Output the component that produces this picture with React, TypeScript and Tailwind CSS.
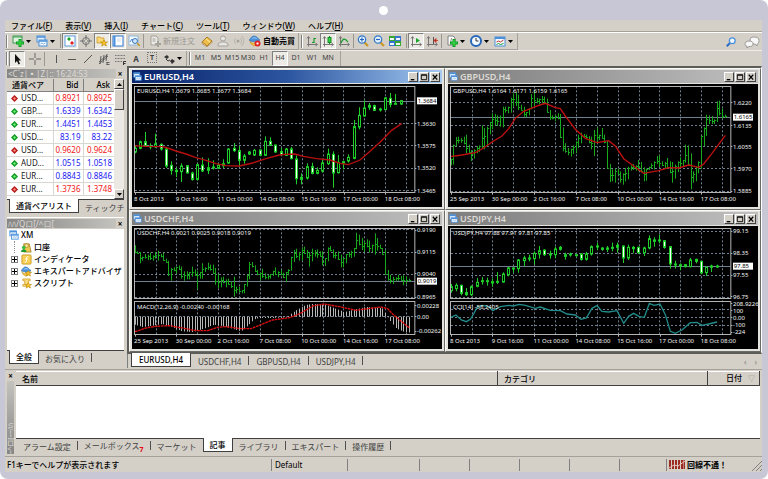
import React from "react";

type Candle = [number, number, number, number, number];
type Point = [number, number];

/* ---------- chart data, three drawing units per pixel ---------- */

const FIRST_X = 27;
const GRID_X = [90, 152, 215, 278, 340, 403, 465, 528, 591, 653, 716, 779, 841];

// high, body top, body bottom, low, 1 = falling
const eurusd: Candle[] = [
  [240, 247, 258, 262, 0], [224, 227, 247, 250, 0], [198, 227, 241, 243, 1], [232, 240, 243, 250, 0],
  [203, 234, 242, 246, 0], [232, 235, 249, 254, 1], [246, 249, 300, 306, 1], [286, 298, 313, 326, 1],
  [305, 313, 317, 333, 0], [292, 300, 317, 348, 0], [298, 299, 321, 322, 1], [317, 321, 340, 344, 1],
  [293, 296, 340, 344, 0], [274, 297, 315, 318, 1], [277, 305, 313, 324, 0], [283, 303, 306, 311, 0],
  [292, 298, 307, 309, 0], [280, 293, 299, 306, 0], [247, 249, 291, 294, 0], [231, 247, 254, 258, 1],
  [240, 254, 283, 302, 1], [264, 270, 283, 293, 0], [255, 258, 264, 267, 1], [249, 253, 267, 270, 0],
  [250, 252, 268, 270, 1], [211, 226, 268, 269, 0], [214, 226, 238, 240, 1], [236, 237, 258, 260, 1],
  [246, 257, 266, 268, 1], [246, 249, 268, 270, 0], [243, 249, 278, 280, 1], [268, 279, 338, 355, 1],
  [322, 334, 340, 355, 0], [292, 302, 336, 341, 0], [290, 302, 322, 325, 1], [304, 313, 322, 325, 0],
  [278, 291, 315, 320, 0], [248, 264, 293, 297, 0], [256, 265, 321, 365, 1], [267, 289, 320, 323, 0],
  [284, 287, 292, 310, 0], [265, 274, 285, 290, 0], [162, 182, 277, 280, 0], [124, 148, 183, 190, 0],
  [103, 126, 150, 152, 0], [111, 118, 124, 132, 0], [116, 119, 133, 135, 1], [125, 129, 131, 137, 0],
  [93, 96, 131, 133, 0], [81, 97, 115, 124, 1], [84, 112, 115, 115, 0], [102, 104, 114, 117, 0],
];

const usdjpy: Candle[] = [
  [228, 236, 248, 254, 0], [226, 232, 242, 250, 0], [230, 232, 256, 262, 1], [240, 254, 260, 264, 1],
  [232, 236, 260, 264, 0], [210, 223, 235, 238, 0], [207, 218, 220, 230, 0], [209, 218, 221, 233, 0],
  [212, 221, 225, 236, 0], [192, 220, 223, 228, 0], [193, 198, 222, 224, 0], [177, 180, 200, 205, 0],
  [178, 180, 182, 194, 0], [153, 156, 182, 194, 0], [143, 150, 158, 174, 0], [140, 150, 153, 160, 0],
  [130, 136, 152, 170, 0], [114, 128, 138, 152, 0], [124, 126, 140, 144, 1], [128, 138, 140, 152, 0],
  [116, 123, 140, 150, 0], [114, 118, 124, 128, 0], [134, 140, 145, 155, 0], [134, 138, 141, 146, 0],
  [138, 140, 142, 146, 0], [136, 138, 154, 158, 1], [132, 138, 154, 158, 0], [112, 116, 138, 143, 0],
  [104, 114, 116, 126, 0], [118, 120, 124, 128, 1], [114, 120, 124, 132, 0], [104, 118, 120, 130, 0],
  [104, 112, 118, 134, 0], [112, 114, 150, 165, 1], [110, 118, 150, 156, 0], [114, 118, 122, 136, 0],
  [116, 118, 134, 138, 1], [116, 120, 134, 144, 0], [82, 92, 120, 124, 0], [88, 96, 100, 116, 0],
  [80, 96, 98, 106, 0], [96, 98, 118, 122, 1], [114, 116, 168, 182, 1], [158, 168, 171, 182, 0],
  [166, 170, 174, 186, 0], [168, 170, 176, 178, 0], [150, 156, 176, 178, 0], [152, 154, 160, 166, 1],
  [160, 160, 195, 197, 1], [176, 178, 194, 204, 0], [170, 174, 178, 192, 0], [170, 174, 177, 180, 0],
];

// high, low
const gbpusd: Point[] = [
  [278, 298], [236, 296], [213, 240], [212, 232], [216, 230], [212, 235], [206, 262], [236, 260], [252, 285],
  [250, 278], [240, 262], [238, 258], [178, 246], [186, 250], [182, 238], [168, 205], [142, 190], [144, 178],
  [148, 180], [148, 182], [122, 184], [122, 140], [122, 142], [95, 140], [82, 120], [78, 120], [86, 132],
  [116, 134], [122, 152], [138, 154], [126, 148], [84, 130], [74, 122], [96, 112], [98, 116], [90, 112],
  [92, 110], [98, 140], [132, 162], [148, 160], [146, 166], [142, 160], [144, 216], [184, 256], [232, 260],
  [246, 268], [248, 272], [238, 264], [226, 262], [206, 246], [200, 232], [204, 212], [206, 216], [210, 232],
  [212, 250], [192, 270], [184, 230], [206, 222], [186, 218], [206, 232], [224, 308], [294, 348], [310, 346],
  [308, 350], [308, 326], [316, 350], [322, 356], [306, 346], [302, 340], [298, 314], [294, 312], [298, 314],
  [282, 314], [288, 318], [304, 346], [308, 344], [302, 312], [292, 308], [286, 310], [270, 294], [268, 304],
  [286, 300], [288, 306], [276, 306], [286, 322], [288, 350], [296, 338], [286, 318], [274, 306], [282, 300],
  [236, 290], [238, 298], [262, 370], [316, 350], [302, 346], [286, 322], [208, 308], [184, 240], [146, 210],
  [148, 174], [150, 174], [160, 174], [106, 168], [104, 148], [128, 158], [146, 156],
];

const usdchf: Point[] = [
  [112, 136], [130, 138], [132, 166], [146, 158], [138, 152], [140, 156], [134, 156], [142, 158], [132, 152],
  [128, 158], [138, 148], [134, 158], [152, 164], [158, 204], [180, 218], [178, 190], [176, 196], [172, 186],
  [176, 212], [190, 218], [190, 214], [192, 214], [176, 206], [184, 204], [190, 244], [192, 212], [166, 212],
  [178, 192], [164, 186], [170, 188], [170, 198], [180, 230], [198, 240], [208, 238], [206, 226], [214, 238],
  [212, 230], [220, 240], [206, 266], [236, 256], [236, 252], [246, 256], [228, 256], [200, 236], [162, 214],
  [162, 178], [172, 192], [186, 202], [194, 218], [182, 210], [196, 214], [200, 214], [198, 212], [188, 204],
  [178, 200], [190, 208], [186, 202], [194, 210], [192, 222], [184, 202], [146, 188], [126, 162], [122, 150],
  [132, 158], [118, 158], [116, 138], [126, 150], [132, 176], [122, 160], [126, 146], [124, 150], [130, 146],
  [130, 172], [150, 174], [118, 160], [114, 130], [124, 150], [134, 152], [130, 156], [140, 178], [150, 178],
  [138, 166], [132, 148], [128, 150], [120, 146], [74, 124], [80, 112], [90, 126], [100, 132], [94, 118],
  [98, 134], [110, 132], [76, 140], [90, 128], [110, 122], [120, 140], [126, 200], [186, 218], [200, 226],
  [206, 228], [208, 220], [200, 218], [204, 218], [202, 232], [206, 228], [212, 220],
];

const eurusdAverage =
  "24,239 60,241 110,242 125,246 150,255 180,264 210,275 240,283 270,293 300,299 340,300 380,291 420,278 460,267 480,265 507,264 532,271 572,278 612,282 642,292 667,296 702,282 727,260 762,229 797,193 827,173";
const gbpusdAverage =
  "24,272 60,267 100,260 125,246 150,228 180,210 200,188 220,157 245,136 280,122 310,112 340,125 355,128 370,150 400,190 430,217 465,230 500,224 520,240 545,278 575,300 605,322 650,314 680,305 710,306 740,297 770,304 785,294 810,262 850,208";
const macdSignal =
  "27,371 60,360 90,355 130,353 180,362 210,368 245,368 275,358 300,356 345,362 375,362 400,352 440,336 490,329 520,318 560,294 595,288 640,296 690,307 740,300 765,297 785,302 800,318 850,360";
const cciLine =
  "27,328 42,321 58,336 73,341 85,334 95,318 105,298 120,292 140,296 152,308 175,296 200,292 214,294 232,289 250,292 280,301 295,297 325,307 355,308 375,318 400,321 417,334 433,330 450,301 465,293 480,310 500,312 525,308 545,346 560,325 575,316 592,326 607,328 622,286 636,292 654,288 670,320 685,370 700,376 720,366 745,344 765,343 780,352 800,348 825,342";
const macdEnvelope: Point[] = [
  [27, 350], [50, 357], [75, 354], [110, 348], [135, 356], [170, 370], [200, 372], [235, 362], [265, 350],
  [300, 356], [345, 370], [370, 350], [385, 334], [400, 330], [440, 330], [485, 328], [500, 314], [520, 302],
  [540, 291], [560, 288], [600, 290], [630, 302], [655, 312], [690, 304], [720, 297], [770, 300], [785, 326],
  [795, 340], [810, 360], [830, 370], [852, 374],
];

const shortDates = ["8 Oct 2013", "9 Oct 16:00", "11 Oct 00:00", "14 Oct 08:00", "15 Oct 16:00", "17 Oct 00:00", "18 Oct 08:00"];
const longDates = ["25 Sep 2013", "30 Sep 00:00", "2 Oct 16:00", "7 Oct 08:00", "10 Oct 00:00", "14 Oct 16:00", "17 Oct 08:00"];

// centre a line on a whole pixel so that it stays sharp
const snap = (v: number) => Math.round((v - 1.5) / 3) * 3 + 1.5;

function envelopeAt(x: number) {
  for (let i = 1; i < macdEnvelope.length; i++) {
    const [x0, y0] = macdEnvelope[i - 1];
    const [x1, y1] = macdEnvelope[i];
    if (x <= x1) return y0 + ((x - x0) / (x1 - x0)) * (y1 - y0);
  }
  return 374;
}

function Candles({ data }: { data: Candle[] }) {
  return (
    <g stroke="#1fd02a" strokeWidth="3">
      {data.map(([high, top, bottom, low, falling], i) => {
        const x = snap(FIRST_X + i * 15.65);
        const h = Math.max(3, bottom - top);
        return (
          <g key={i}>
            <line x1={x} x2={x} y1={high} y2={low} />
            <rect x={x - 3} y={top} width="6" height={h} fill={falling ? "#ffffff" : "#000000"} />
          </g>
        );
      })}
    </g>
  );
}

function Bars({ data }: { data: Point[] }) {
  return (
    <g stroke="#17a81c" strokeWidth="3">
      {data.map(([high, low], i) => {
        const x = snap(FIRST_X + i * 7.83);
        const next = data[i + 1] ?? data[i];
        const close = Math.min(low - 2, Math.max(high + 2, (next[0] + next[1]) / 2));
        return <path key={i} d={`M${x} ${high}V${low}M${x} ${snap(close)}h5`} />;
      })}
    </g>
  );
}

interface ChartProps {
  label: string;
  dates: string[];
  gridY: number[];
  prices: [string, number][];
  current: [string, number];
  split?: boolean;
  children: React.ReactNode;
}

function Chart({ label, dates, gridY, prices, current, split, children }: ChartProps) {
  return (
    <svg viewBox="18 54 930 369" className="block h-auto w-full bg-black font-['Noto_Sans',sans-serif]">
      <g stroke="#6f7f90" strokeWidth="3" strokeDasharray="6 6">
        {GRID_X.map((x) => (
          <line key={x} x1={snap(x)} x2={snap(x)} y1="61" y2="380" />
        ))}
        {gridY.map((y) => (
          <line key={y} x1="27" x2="866" y1={snap(y)} y2={snap(y)} />
        ))}
      </g>
      <line x1="27" x2="866" y1={snap(current[1])} y2={snap(current[1])} stroke="#708090" strokeWidth="3" />
      {children}
      <g fill="none" stroke="#b4b4b4" strokeWidth="3">
        {split ? (
          <>
            <rect x="25.500" y="61.500" width="841" height="210" />
            <rect x="25.500" y="280.500" width="841" height="99" />
          </>
        ) : (
          <rect x="25.500" y="61.500" width="841" height="318" />
        )}
        {dates.map((d, i) => (
          <path key={d} d={`M${snap(27 + i * 125.400)} 380v6`} />
        ))}
        {prices.map(([p, y]) => (
          <path key={p} d={`M867 ${snap(y)}h4`} />
        ))}
      </g>
      <g fill="#f4f4f4" fontSize="18" className="whitespace-pre">
        <text x="33" y="81">{label}</text>
        {dates.map((d, i) => (
          <text key={d} x={24 + i * 125.400} y="405">{d}</text>
        ))}
        {prices.map(([p, y]) => (
          <text key={p} x="873" y={y + 7}>{p}</text>
        ))}
      </g>
      <rect x="873" y={current[1] - 11} width="60" height="21" fill="#ffffff" />
      <text x="875" y={current[1] + 6} fontSize="18" fill="#000000">{current[0]}</text>
    </svg>
  );
}

/* ---------- icons ---------- */

function Icon({ children, className = "size-3" }: { children: React.ReactNode; className?: string }) {
  return (
    <svg viewBox="0 0 12 12" className={`${className} shrink-0`} fill="none" aria-hidden="true">
      {children}
    </svg>
  );
}

const Windows = () => (
  <>
    <rect x="1" y="1" width="8" height="6" fill="#e4f1fd" stroke="#4a8fd8" />
    <path d="M1 2h8" stroke="#4a8fd8" strokeWidth="1.500" />
    <rect x="3" y="5" width="8" height="6" fill="#f4faff" stroke="#4a8fd8" />
    <path d="M3 6h8" stroke="#4a8fd8" strokeWidth="1.500" />
    <path d="M4.500 9l1.500-1 1.500 1L9.500 8" stroke="#6aa5e0" strokeWidth=".8" />
  </>
);
const Plus = () => <path d="M8 4v8M4 8h8" stroke="#0d9c22" strokeWidth="3" />;
const PlusLight = () => <path d="M8 5v6M5 8h6" stroke="#3fdc4c" strokeWidth="1.200" />;
const Axes = () => <path d="M2.500 2v9.500M1 9.500h10M1 3.500l1.500-2 1.500 2M9.500 8l2 1.500-2 1.500" stroke="#767676" />;
const Gold = () => <path d="M8 5l1 2h2.500l-2 1.500.8 2.500L8 9.500 5.700 11l.8-2.500-2-1.500H7z" fill="#f7c52c" stroke="#c08808" strokeWidth=".7" />;
const Expert = () => (
  <>
    <path d="M1 6c1 3 8 3 9 0l-2 4-3 1-3-2z" fill="#f2c64c" stroke="#c08c1c" strokeWidth=".6" />
    <path d="M0 5c2-1 2-4 5-4s4 3 6 4c-2 2-9 2-11 0z" fill="#4d94dc" stroke="#2b68ad" strokeWidth=".6" />
    <path d="M3.500 3.500c1-1 3-1 4 0" stroke="#a9d2fa" />
  </>
);
const Zoom = ({ plus }: { plus: boolean }) => (
  <>
    <path d="M7.500 7.500L11 11" stroke="#c99625" strokeWidth="2.200" />
    <circle cx="5" cy="4.500" r="3.700" fill="#e6f3ff" stroke="#3076c8" strokeWidth="1.200" />
    <path d={plus ? "M3 4.500h4M5 2.500v4" : "M3 4.500h4"} stroke="#2465bd" strokeWidth="1.200" />
  </>
);

function Arrow() {
  return <svg viewBox="0 0 5 3" className="h-[3px] w-[5px] shrink-0" aria-hidden="true"><path d="M0 0h5L2.500 3z" fill="#000" /></svg>;
}

interface ToolProps {
  name: string;
  pressed?: boolean;
  wide?: boolean;
  children: React.ReactNode;
}

function Tool({ name, pressed, wide, children }: ToolProps) {
  const look = pressed
    ? "border-[#808080] border-r-white border-b-white bg-[#edebe6]"
    : "border-transparent";
  return (
    <button
      type="button"
      aria-label={name}
      className={`flex h-4 shrink-0 items-center justify-center gap-[2px] border ${wide ? "w-6" : "w-4"} ${look}`}
    >
      <Icon>{children}</Icon>
      {wide && <Arrow />}
    </button>
  );
}

const Sep = () => <span className="mx-[1px] h-[14px] w-px shrink-0 bg-[#9a9791]" />;
const Grip = () => <span className="mx-[1px] h-[13px] w-[2px] shrink-0 border-l border-[#808080] bg-white" />;

/* ---------- windows and docks ---------- */

interface ChartWindowProps {
  title: string;
  active?: boolean;
  children: React.ReactNode;
}

function ChartWindow({ title, active, children }: ChartWindowProps) {
  const bar = active
    ? "bg-linear-to-r from-[#0a246a] via-[#2c55a0] to-[#a6caf0] text-white"
    : "bg-linear-to-r from-[#7d7d7d] to-[#c0c0c0] text-[#dedbd5]";
  return (
    <section className="border border-[#f8f8f6] border-r-[#6a6a66] border-b-[#6a6a66] bg-[#e4e2dd] px-[2px] pt-px pb-[2px]">
      <header className={`mb-px flex h-[13px] items-center pr-[2px] pl-px ${bar}`}>
        <Icon className="mr-[2px] size-[9px]"><Windows /></Icon>
        <h2 className="flex-1 text-[9px] leading-[13px] font-semibold">{title}</h2>
        <WindowButton name="最小化"><path d="M2 7.500h4" stroke="#000" strokeWidth="1.500" /></WindowButton>
        <WindowButton name="最大化"><path d="M1.500 2h6v5.500h-6zM1.500 2.500h6" stroke="#000" /></WindowButton>
        <WindowButton name="閉じる"><path d="M2 2l5 5.500M7 2L2 7.500" stroke="#000" strokeWidth="1.400" /></WindowButton>
      </header>
      {children}
    </section>
  );
}

function WindowButton({ name, children }: { name: string; children: React.ReactNode }) {
  return (
    <button type="button" aria-label={name} className="ml-px h-[10px] w-[10px] border border-white border-r-[#404040] border-b-[#404040] bg-[#d4d0c8]">
      <svg viewBox="0 0 9 9" className="size-2" fill="none">{children}</svg>
    </button>
  );
}

function DockTitle({ text }: { text: string }) {
  return (
    <div className="flex h-[11px] shrink-0 items-center text-[8px] leading-[9px]">
      <span className="h-[9px] flex-1 overflow-hidden bg-linear-to-r from-[#858585] to-[#c4c2bd] pl-px whitespace-nowrap text-[#dedbd5]">
        {text}
      </span>
      <button type="button" aria-label="閉じる" className="w-2 text-center font-bold">×</button>
    </div>
  );
}

const quotes: [string, string, string, boolean, boolean][] = [
  ["USD...", "0.8921", "0.8925", false, false],
  ["GBP...", "1.6339", "1.6342", true, true],
  ["EUR...", "1.4451", "1.4453", true, true],
  ["USD...", "83.19", "83.22", true, true],
  ["USD...", "0.9620", "0.9624", false, false],
  ["AUD...", "1.0515", "1.0518", true, true],
  ["EUR...", "0.8843", "0.8846", true, true],
  ["EUR...", "1.3736", "1.3748", false, false],
];

function MarketWatch() {
  return (
    <>
      <DockTitle text="<C´z|▪|Z|:: 16:24:53" />
      <div className="flex h-[120px] shrink-0 overflow-hidden bg-white">
        <table className="h-[104px] flex-1 table-fixed border-collapse text-[8px] leading-[12px]">
          <thead>
            <tr className="h-3 bg-[#d4d0c8]">
              <th className="w-[46px] border-r border-b border-[#808080] p-0 pl-[5px] text-left font-medium whitespace-nowrap">通貨ペア</th>
              <th className="w-[30px] border-r border-b border-[#808080] p-0 pr-1 text-right font-medium">Bid</th>
              <th className="border-b border-[#808080] p-0 pr-1 text-right font-medium">Ask</th>
            </tr>
          </thead>
          <tbody>
            {quotes.map(([symbol, bid, ask, up, blue], i) => (
              <tr key={i} className={`h-[13px] border-b border-[#d9d7d2] ${blue ? "text-[#1717f0]" : "text-[#f01717]"}`}>
                <td className="border-r border-[#d9d7d2] p-0 pl-1 text-[#202020]">
                  <span className="flex items-center gap-[3px]">
                    <svg viewBox="0 0 7 7" className="size-[7px]">
                      <path d="M3.500 0L7 3.500 3.500 7 0 3.500z" fill={up ? "#129a22" : "#b91818"} />
                      <path d="M3.500 2L5 3.500 3.500 5 2 3.500z" fill={up ? "#6cf078" : "#ff8d80"} />
                    </svg>
                    {symbol}
                  </span>
                </td>
                <td className="border-r border-[#d9d7d2] p-0 pr-[2px] text-right">{bid}</td>
                <td className="p-0 pr-[2px] text-right">{ask}</td>
              </tr>
            ))}
          </tbody>
        </table>
        <div className="flex w-[10px] flex-col bg-[#ece9e4]">
          <button type="button" aria-label="上へ" className="flex h-[10px] items-center justify-center border border-white border-r-[#404040] border-b-[#404040] bg-[#d4d0c8]">
            <span className="rotate-180"><Arrow /></span>
          </button>
          <span className="h-[21px] border border-white border-r-[#404040] border-b-[#404040] bg-[#d4d0c8]" />
          <button type="button" aria-label="下へ" className="mt-auto flex h-[10px] items-center justify-center border border-white border-r-[#404040] border-b-[#404040] bg-[#d4d0c8]">
            <Arrow />
          </button>
        </div>
      </div>
      <div role="tablist" className="flex h-[14px] shrink-0 border-t border-[#404040] pl-[2px] text-[8px] leading-[13px] whitespace-nowrap">
        <Tab label="通貨ペアリスト" active />
        <Tab label="ティックチ" />
      </div>
    </>
  );
}

interface TabProps {
  label: string;
  active?: boolean;
  wide?: boolean;
  children?: React.ReactNode;
}

function Tab({ label, active, wide, children }: TabProps) {
  const look = active
    ? "-mt-px border-r border-b border-l border-[#404040] bg-white font-medium text-black"
    : "text-[#404040]";
  return (
    <button
      type="button"
      role="tab"
      aria-selected={!!active}
      className={`h-[14px] shrink-0 ${wide ? "px-[7px]" : "px-[6px]"} ${look}`}
    >
      {label}
      {children}
    </button>
  );
}

const TabSep = () => <span className="mt-[2px] h-[9px] w-px shrink-0 bg-[#505050]" />;

function Navigator() {
  const items = [
    {
      label: "口座",
      icon: (
        <>
          <path d="M3 2h6l2 9H3z" fill="#f0c850" stroke="#9c7414" strokeWidth=".8" />
          <circle cx="6" cy="4" r="2" fill="#fbe69d" stroke="#a67c1c" strokeWidth=".7" />
          <circle cx="3" cy="6" r="2" fill="#35bc42" />
          <path d="M0 11c0-4 6-4 6 0z" fill="#1d9a2c" />
        </>
      ),
    },
    {
      label: "インディケータ",
      icon: (
        <>
          <rect x="1" y="1" width="10" height="10" rx="1" fill="#f8cf57" stroke="#c99a26" />
          <path d="M8 3c-2-1-2 1-2 3s-.5 4-2 3M4.500 5.500h3" stroke="#fff" />
        </>
      ),
    },
    { label: "エキスパートアドバイザ", icon: <><Expert /><Gold /></> },
    {
      label: "スクリプト",
      icon: (
        <>
          <path d="M2 1h8v2H8v6H2V7h2V3H2z" fill="#fbdc7e" stroke="#c99a26" strokeWidth=".8" />
          <Gold />
        </>
      ),
    },
  ];
  return (
    <>
      <DockTitle text="ﾊﾊ/Qロ[/^ロ[" />
      <ul className="flex-1 overflow-hidden bg-white pl-[2px] text-[8px] leading-3 font-medium whitespace-nowrap">
        <li className="flex h-3 items-center gap-[2px]">
          <Icon className="size-[10px]"><Windows /></Icon>
          <span>XM</span>
        </li>
        {items.map((item, i) => (
          <li key={item.label} className="flex h-3 items-center gap-[2px] pl-[2px]">
            {i === 0 ? (
              <span className="ml-[3px] h-3 w-[5px] border-l border-dotted border-[#909090]" />
            ) : (
              <button type="button" aria-label={`${item.label}を開く`} className="mr-[1px] flex size-[7px] items-center justify-center border border-[#808080]">
                <svg viewBox="0 0 5 5" className="size-[5px]"><path d="M0 2.500h5M2.500 0v5" stroke="#000" /></svg>
              </button>
            )}
            <Icon className="size-[11px]">{item.icon}</Icon>
            <span>{item.label}</span>
          </li>
        ))}
      </ul>
      <div role="tablist" className="flex h-[14px] shrink-0 border-t border-[#404040] pl-[2px] text-[8px] leading-[13px]">
        <Tab label="全般" active />
        <Tab label="お気に入り" />
        <TabSep />
      </div>
    </>
  );
}

const menus: [string, string][] = [
  ["ファイル", "F"], ["表示", "V"], ["挿入", "I"], ["チャート", "C"], ["ツール", "T"], ["ウィンドウ", "W"], ["ヘルプ", "H"],
];

function MainToolbar() {
  return (
    <div className="flex h-[18px] items-center border-t border-white pr-[2px]">
      <div className="flex items-center border-r border-b border-[#a5a29b] pr-px">
        <Grip />
        <Tool name="新規チャート" wide>
          <rect x="1" y="1" width="9" height="7" fill="#dff0df" stroke="#3d9c50" />
          <path d="M1 2h9" stroke="#3d9c50" />
          <Plus />
          <PlusLight />
        </Tool>
        <Tool name="組表示" wide><Windows /></Tool>
        <span className="w-[2px]" />
        <Sep />
        <Tool name="気配値表示" pressed>
          <rect x="1" y="1" width="10" height="10" fill="#fff" stroke="#5b9be0" />
          <path d="M3 4l2-2 2 2-2 2z" fill="#17a52a" />
          <path d="M6 8l2-2 2 2-2 2z" fill="#e02020" />
        </Tool>
        <Tool name="データウィンドウ">
          <circle cx="6" cy="6" r="3.500" stroke="#707070" />
          <path d="M6 0v5M6 7v5M0 6h5M7 6h5" stroke="#707070" />
        </Tool>
        <Tool name="ナビゲーター" pressed>
          <path d="M1 2h3l1 1h3v5H1z" fill="#fbd978" stroke="#c99a26" strokeWidth=".8" />
          <Gold />
        </Tool>
        <Tool name="ターミナル" pressed>
          <rect x="1" y="1" width="10" height="10" fill="#fff" stroke="#2d74cc" />
          <path d="M2.500 1v10" stroke="#4a90e0" strokeWidth="2" />
          <path d="M5 4h4M5 6h4" stroke="#cdd9e8" />
        </Tool>
        <Tool name="ストラテジーテスター">
          <rect x="1" y="1" width="9" height="9" fill="#f4faff" stroke="#8fb6dc" />
          <path d="M2 7l2-3 2 2" stroke="#4a8fd8" />
          <circle cx="7" cy="6" r="2.500" fill="#cfe6fb" stroke="#3978bd" />
          <path d="M9 8l3 3" stroke="#c99625" strokeWidth="1.500" />
        </Tool>
        <Sep />
        <button type="button" disabled className="flex h-4 items-center gap-[2px] px-1 text-[8px] text-[#9a978f]">
          <Icon>
            <path d="M2 1h5l2 2v7H2z" fill="#ebe9e5" stroke="#a5a29b" />
            <path d="M3.500 4h3M3.500 6h3" stroke="#a5a29b" />
            <path d="M9 6v6M6 9h6" stroke="#a5a29b" strokeWidth="2" />
          </Icon>
          新規注文
        </button>
        <Tool name="メタエディター">
          <path d="M1 7l5-5 5 4-5 5z" fill="#efbd45" stroke="#9c6a14" strokeWidth=".8" />
          <path d="M1 7v1.500l5 3.300 5-4.300V6l-5 5z" fill="#fff3d0" stroke="#9c6a14" strokeWidth=".6" />
          <path d="M5 4l4 3" stroke="#fff0b8" />
        </Tool>
        <Tool name="アカウント">
          <circle cx="6" cy="3.500" r="2.500" fill="#e8e6e2" stroke="#a5a29b" />
          <path d="M1 11V9l3-2h4l3 2v2z" fill="#e8e6e2" stroke="#a5a29b" />
        </Tool>
        <Tool name="シグナル">
          <circle cx="5" cy="6" r="1.500" fill="#a5a29b" />
          <path d="M3 3c-2 2-2 4 0 6M7 3c2 2 2 4 0 6M8.500 1c3 3 3 7 0 10" stroke="#b4b1aa" />
        </Tool>
        <button type="button" className="flex h-4 items-center gap-[2px] px-[2px] text-[8px] font-bold">
          <Icon>
            <Expert />
            <circle cx="8.500" cy="8.500" r="3" fill="#e02020" />
            <rect x="7.500" y="7.500" width="2" height="2" fill="#fff" />
          </Icon>
          自動売買
        </button>
      </div>
      <div className="ml-px flex items-center border-r border-b border-[#a5a29b] pr-[2px]">
        <Grip />
        <Tool name="バーチャート"><Axes /><path d="M8 3v5M8 3.500h2M6 7.500h2" stroke="#169c2a" strokeWidth="1.200" /></Tool>
        <Tool name="ローソク足" pressed><Axes /><path d="M7.500 1v8" stroke="#118a22" /><rect x="6" y="2.500" width="3" height="5" fill="#34d447" stroke="#118a22" /></Tool>
        <Tool name="ラインチャート"><Axes /><path d="M3 8c2-5 4-5 7-1" stroke="#169c2a" strokeWidth="1.200" /></Tool>
        <Sep />
        <Tool name="拡大"><Zoom plus /></Tool>
        <Tool name="縮小"><Zoom plus={false} /></Tool>
        <Tool name="整列">
          <path d="M0 1h6v5H0zM6 6h6v5H6z" fill="#36a832" />
          <path d="M6 1h6v5H6zM0 6h6v5H0z" fill="#3a72d0" />
          <path d="M1 3h4v2H1zM7 3h4v2H7zM1 8h4v2H1zM7 8h4v2H7z" fill="#eef6ff" />
        </Tool>
        <span className="w-[2px]" />
        <Sep />
        <Tool name="自動スクロール" pressed><Axes /><path d="M6 3l4 2.500L6 8z" fill="#19a62c" /></Tool>
        <Tool name="チャートシフト"><Axes /><path d="M7.500 2v7" stroke="#555" /><path d="M8 5.500h4M8 5.500l2-2v4z" stroke="#c03020" fill="#c03020" strokeWidth=".8" /></Tool>
        <Sep />
        <Tool name="インディケータ" wide>
          <path d="M2 1h5l2 2v7H2z" fill="#fff" stroke="#808080" />
          <path d="M6 3c-1 0-1 5-2 5" stroke="#808080" />
          <Plus />
          <PlusLight />
        </Tool>
        <Tool name="時間足設定" wide>
          <circle cx="6" cy="6" r="5" fill="#f5faff" stroke="#2467bd" strokeWidth="2" />
          <path d="M6 3v3h2.500" stroke="#333" />
        </Tool>
        <Tool name="定型チャート" wide>
          <rect x="1" y="2" width="10" height="9" fill="#f4faff" stroke="#4a8fd8" />
          <path d="M1 3h10" stroke="#4a8fd8" strokeWidth="2" />
          <path d="M2.500 7l2-1 2 1 3-2" stroke="#c03a2a" />
          <path d="M2.500 9.500l2-1 2 1 3-1" stroke="#229a35" />
        </Tool>
      </div>
      <div className="ml-auto flex gap-2">
        <button type="button" aria-label="検索">
          <Icon className="size-[10px]">
            <path d="M5 7L1 11" stroke="#2d6cc4" strokeWidth="2.500" />
            <circle cx="7.500" cy="4.500" r="3.500" fill="#eef6ff" stroke="#4a8fd8" strokeWidth="1.500" />
          </Icon>
        </button>
        <button type="button" aria-label="チャット">
          <svg viewBox="0 0 16 12" className="h-3 w-4" fill="#f7f7f7" stroke="#8c8c8c" strokeWidth=".8">
            <path d="M10 1c3 0 5 1 5 3.500S13.500 8 13 8v2l-2-2C8 8 6 7 6 4.500S7 1 10 1z" />
            <path d="M5 5c3 0 4 1 4 3s-1 2.500-4 2.500L3 12v-2C1 10 1 9 1 8s1-3 4-3z" />
          </svg>
        </button>
      </div>
    </div>
  );
}

const periods = ["M1", "M5", "M15", "M30", "H1", "H4", "D1", "W1", "MN"];

function LineToolbar() {
  return (
    <div className="flex h-4 items-center border-t border-[#efede9] text-[7px] text-[#404040]">
      <div className="flex items-center border-r border-[#a5a29b] pr-[2px]">
        <Grip />
        <Tool name="カーソル" pressed><path d="M4 1v9l2-2 1.500 3.500 1.500-.7L7.500 7.500H10z" fill="#111" /></Tool>
        <span className="w-[2px]" />
        <Tool name="クロスヘア"><path d="M6 0v5M6 7v5M0 6h5M7 6h5" stroke="#666" /></Tool>
        <Sep />
        <span className="w-[2px]" />
        <Tool name="垂直線"><path d="M6.500 2v8" stroke="#555" /></Tool>
        <Tool name="水平線"><path d="M2 6.500h8" stroke="#555" /></Tool>
        <Tool name="トレンドライン"><path d="M2 10l8-8" stroke="#555" /></Tool>
        <Tool name="チャネル">
          <path d="M1 9l8-7M1 11l9-8M3 3l-1 8M6 2L5 10M9 1L8 8M8.500 9.500h3M8.500 11.500h3M9 9v3" stroke="#555" strokeWidth=".9" />
        </Tool>
        <Tool name="フィボナッチ">
          <path d="M1 2.500h10M1 5.500h10M1 8.500h7" stroke="#777" strokeDasharray="1 .5" />
          <path d="M9.500 12V8.500H12M9.500 10.500h2" stroke="#333" />
        </Tool>
        <button type="button" className="h-4 w-4 text-[8px] font-bold">A</button>
        <button type="button" className="h-4 w-4">
          <span className="border border-dotted border-[#777] px-[2px] text-[7px] font-bold">T</span>
        </button>
        <Tool name="矢印" wide>
          <path d="M1 4l3-2 2 2-2 2zM7 8l2-2 3 2-3 3z" fill="#333" />
          <path d="M3 6l2 2 2-1" stroke="#333" />
        </Tool>
      </div>
      <div className="ml-px flex items-center border-r border-[#a5a29b] pr-1">
        <Grip />
        {periods.map((p) => (
          <button
            key={p}
            type="button"
            aria-pressed={p === "H4"}
            className={
              p === "H4"
                ? "h-[15px] w-4 border border-[#808080] border-r-white border-b-white bg-[#edebe6] text-center"
                : "flex h-[15px] w-4 items-center justify-center"
            }
          >
            {p}
          </button>
        ))}
      </div>
    </div>
  );
}

function Terminal() {
  return (
    <section className="flex h-[87px] shrink-0 gap-[2px] border-t border-[#a5a29b] pt-px pr-[2px] pb-[2px] pl-[2px] text-[8px]">
      <div className="flex w-[7px] flex-col items-center">
        <button type="button" aria-label="閉じる" className="h-[10px] leading-[10px] font-bold">×</button>
        <span className="flex-1 bg-linear-to-b from-[#c4c2bd] to-[#858585] text-left text-[7px] leading-[7px] whitespace-nowrap text-[#e4e1db] [writing-mode:sideways-lr]">
          ｰ^ロ[ｰ~ﾊﾊ
        </span>
      </div>
      <div className="flex min-w-0 flex-1 flex-col">
        <table className="w-full table-fixed border-collapse">
          <thead>
            <tr className="h-[13px] text-left leading-3">
              <th className="border-t border-r border-b border-[#404040] border-t-white p-0 pl-[6px] font-medium">名前</th>
              <th className="w-[210px] border-t border-r border-b border-[#404040] border-t-white p-0 pl-[6px] font-medium">カテゴリ</th>
              <th className="w-[52px] border-t border-r border-b border-[#404040] border-t-white p-0 pr-1 text-right font-medium">
                日付<span className="ml-[6px] text-[7px] text-[#8c8c8c]">▽</span>
              </th>
            </tr>
          </thead>
        </table>
        <div className="flex-1 bg-white" />
        <div role="tablist" className="flex h-[16px] shrink-0 border-t border-[#404040] pl-px leading-[13px]">
          <Tab label="アラーム設定" />
          <TabSep />
          <Tab label="メールボックス"><span className="align-sub text-[7px] leading-none font-bold text-red-600">7</span></Tab>
          <TabSep />
          <Tab label="マーケット" />
          <Tab label="記事" active />
          <Tab label="ライブラリ" />
          <TabSep />
          <Tab label="エキスパート" />
          <TabSep />
          <Tab label="操作履歴" />
          <TabSep />
        </div>
      </div>
    </section>
  );
}

function StatusBar() {
  return (
    <footer className="flex h-4 shrink-0 items-center border-t border-[#a5a29b] text-[8px] leading-3">
      <span className="flex-1 pl-[2px] font-medium">F1キーでヘルプが表示されます</span>
      <span className="h-3 w-[76px] border-l border-[#808080] pl-[3px]">Default</span>
      <span className="h-3 w-[72px] border-l border-[#808080]" />
      {[1, 2, 3, 4].map((n) => (
        <span key={n} className="h-3 w-[50px] border-l border-[#808080]" />
      ))}
      <span className="h-3 w-[47px] border-l border-[#808080]" />
      <span className="flex h-3 w-[96px] items-center gap-[2px] border-l border-[#808080] pl-[2px] font-bold">
        <svg viewBox="0 0 16 9" className="h-[9px] w-4">
          <path d="M1 0v9M4 0v9M7 0v9M10 0v9M13 0v9M15.500 0v9" stroke="#9c2b24" strokeWidth="2" />
          <path d="M0 8l5-3 4 1 7-5" stroke="#e8c8b8" fill="none" />
        </svg>
        回線不通！
        <svg viewBox="0 0 10 10" className="ml-auto size-[10px] self-end">
          <path d="M0 10L10 0M4 10l6-6M8 10l2-2" stroke="#808080" />
        </svg>
      </span>
    </footer>
  );
}

export default function App() {
  return (
    <div className="flex min-h-screen flex-col rounded-lg bg-[#c8c7d6] pr-[6px] pb-[7px] pl-[5px] font-['Noto_Sans','Noto_Sans_CJK_JP',sans-serif] text-black">
      <div className="flex h-5 items-center justify-center">
        <span className="size-[9px] rounded-full bg-white" />
      </div>
      <main className="flex flex-1 flex-col bg-[#d4d0c8]">
        <nav className="flex h-3 items-center gap-[13px] border-b border-[#a5a29b] pl-[6px] text-[8px] leading-[11px] font-medium">
          {menus.map(([label, key]) => (
            <button key={key} type="button" className="whitespace-nowrap">
              {label}(<span className="underline">{key}</span>)
            </button>
          ))}
        </nav>
        <MainToolbar />
        <LineToolbar />
        <div className="flex flex-1">
          <aside className="flex w-[122px] shrink-0 flex-col pt-[2px] pr-[3px] pb-[5px] pl-[2px]">
            <MarketWatch />
            <div className="h-[5px] shrink-0 border-b border-white" />
            <Navigator />
          </aside>
          <div className="min-w-0 flex-1">
            <div className="grid grid-cols-2 border-t-2 border-b-2 border-l-2 border-[#5c5c58] border-r border-r-white bg-[#808080]">
              <ChartWindow title="EURUSD,H4" active>
                <Chart
                  label="EURUSD,H4  1.3679 1.3685 1.3677 1.3684"
                  dates={shortDates}
                  gridY={[105, 172, 239, 306, 373]}
                  prices={[["1.3630", 172], ["1.3575", 239], ["1.3520", 306], ["1.3465", 373]]}
                  current={["1.3684", 105]}
                >
                  <Candles data={eurusd} />
                  <polyline points={eurusdAverage} fill="none" stroke="#b80f0f" strokeWidth="4" />
                </Chart>
              </ChartWindow>
              <ChartWindow title="GBPUSD,H4">
                <Chart
                  label="GBPUSD,H4  1.6164 1.6171 1.6159 1.6165"
                  dates={longDates}
                  gridY={[110, 177, 242, 308, 376]}
                  prices={[["1.6220", 110], ["1.6135", 179], ["1.6055", 242], ["1.5970", 308], ["1.5885", 375]]}
                  current={["1.6165", 154]}
                >
                  <Bars data={gbpusd} />
                  <polyline points={gbpusdAverage} fill="none" stroke="#c01010" strokeWidth="4" />
                </Chart>
              </ChartWindow>
              <ChartWindow title="USDCHF,H4">
                <Chart
                  label="USDCHF,H4  0.9021 0.9025 0.9018 0.9019"
                  dates={longDates}
                  gridY={[65, 132, 200, 268, 326]}
                  prices={[["0.9190", 66], ["0.9115", 132], ["0.9040", 197], ["0.8965", 267], ["0.00228", 292], ["0.00", 326], ["-0.00262", 369]]}
                  current={["0.9019", 220]}
                  split
                >
                  <Bars data={usdchf} />
                  <g stroke="#b8b8b8" strokeWidth="3">
                    {usdchf.map((_, i) => {
                      const x = FIRST_X + i * 7.83;
                      return <line key={i} x1={snap(x)} x2={snap(x)} y1="326" y2={envelopeAt(x)} />;
                    })}
                  </g>
                  <polyline points={macdSignal} fill="none" stroke="#e01010" strokeWidth="4" strokeDasharray="8 2" />
                  <text x="33" y="302" fontSize="18" fill="#f4f4f4">MACD(12,26,9) -0.00240 -0.00168</text>
                </Chart>
              </ChartWindow>
              <ChartWindow title="USDJPY,H4">
                <Chart
                  label="USDJPY,H4  97.88 97.91 97.81 97.85"
                  dates={shortDates}
                  gridY={[69, 135, 201, 268, 304, 329, 352]}
                  prices={[["99.15", 69], ["98.35", 135], ["97.55", 201], ["96.75", 266], ["208.9226", 287], ["100", 307], ["0.00", 329], ["-100", 351], ["-224", 372]]}
                  current={["97.85", 175]}
                  split
                >
                  <Candles data={usdjpy} />
                  <polyline points={cciLine} fill="none" stroke="#228b8b" strokeWidth="4" />
                  <text x="33" y="302" fontSize="18" fill="#f4f4f4">CCI(14) -58.2405</text>
                </Chart>
              </ChartWindow>
            </div>
            <div role="tablist" className="flex h-[14px] border-l border-[#808080] pl-[3px] text-[8px] leading-[13px]">
              <Tab label="EURUSD,H4" active wide />
              <Tab label="USDCHF,H4" wide />
              <TabSep />
              <Tab label="GBPUSD,H4" wide />
              <TabSep />
              <Tab label="USDJPY,H4" wide />
              <TabSep />
              <span className="ml-auto flex gap-2 pr-[5px] text-[#808080]">
                <button type="button" aria-label="前へ">‹</button>
                <button type="button" aria-label="次へ">›</button>
              </span>
            </div>
          </div>
        </div>
        <Terminal />
        <StatusBar />
      </main>
    </div>
  );
}
